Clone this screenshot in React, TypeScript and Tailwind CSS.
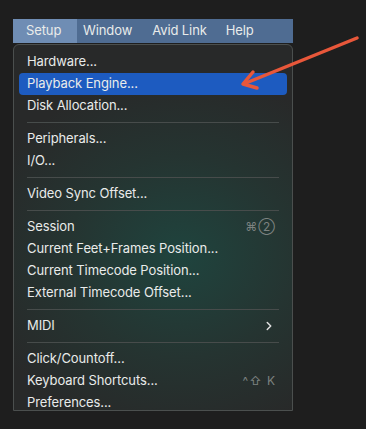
import { ChevronRight } from 'lucide-react'

type Item = { label: string; hint?: string; sub?: boolean; active?: boolean }

const groups: Item[][] = [
  [{ label: 'Hardware...' }, { label: 'Playback Engine...', active: true }, { label: 'Disk Allocation...' }],
  [{ label: 'Peripherals...' }, { label: 'I/O...' }],
  [{ label: 'Video Sync Offset...' }],
  [
    { label: 'Session', hint: '⌘②' },
    { label: 'Current Feet+Frames Position...' },
    { label: 'Current Timecode Position...' },
    { label: 'External Timecode Offset...' },
  ],
  [{ label: 'MIDI', sub: true }],
  [{ label: 'Click/Countoff...' }, { label: 'Keyboard Shortcuts...', hint: '^⇧ K' }, { label: 'Preferences...' }],
]

function Row({ item }: { item: Item }) {
  return (
    <div
      className={`mx-[5px] flex h-[22px] items-center justify-between rounded-[4px] pl-[8px] pr-[11px] ${
        item.active ? 'bg-[#1d5bc0]' : ''
      }`}
    >
      <span>{item.label}</span>
      {item.hint && <span className="text-[12px] tracking-[1px] text-[#7c8280]">{item.hint}</span>}
      {item.sub && <ChevronRight size={14} strokeWidth={2.5} className="text-[#e0e0e0]" />}
    </div>
  )
}

export default function App() {
  return (
    <div className="relative h-[429px] w-[366px] overflow-hidden bg-[#1e1e1e] pt-[19px] font-['Inter',sans-serif] text-[13px] tracking-[-0.1px] text-[#e9ebea]">
      <div className="ml-[13px] flex h-[24px] w-[280px] items-center bg-[#4f6c92]">
        <span className="flex h-full w-[64px] items-center bg-[#6f8db4] pl-[13px]">Setup</span>
        <span className="pl-[6px]">Window</span>
        <span className="pl-[20px]">Avid Link</span>
        <span className="pl-[19px]">Help</span>
      </div>
      <div className="ml-[13px] mt-[1px] h-[367px] w-[280px] rounded-t-[6px] border border-[#4b4f4e] bg-[radial-gradient(ellipse_75%_50%_at_60%_58%,#1f443e_0%,#253431_55%,#282929_100%)] pt-[6px]">
        {groups.map((g, i) => (
          <div key={i}>
            {i > 0 && <div className="mx-[13px] my-[5px] h-px bg-[#474c4b]" />}
            {g.map((it) => (
              <Row key={it.label} item={it} />
            ))}
          </div>
        ))}
      </div>
      <svg className="absolute left-0 top-0" width="366" height="429" viewBox="0 0 366 429">
        <g stroke="#e8573a" strokeWidth="3.5" strokeLinecap="round" strokeLinejoin="round" fill="none">
          <line x1="357" y1="38" x2="246" y2="83" />
          <polyline points="253,72 243,84 257,88" />
        </g>
      </svg>
    </div>
  )
}
